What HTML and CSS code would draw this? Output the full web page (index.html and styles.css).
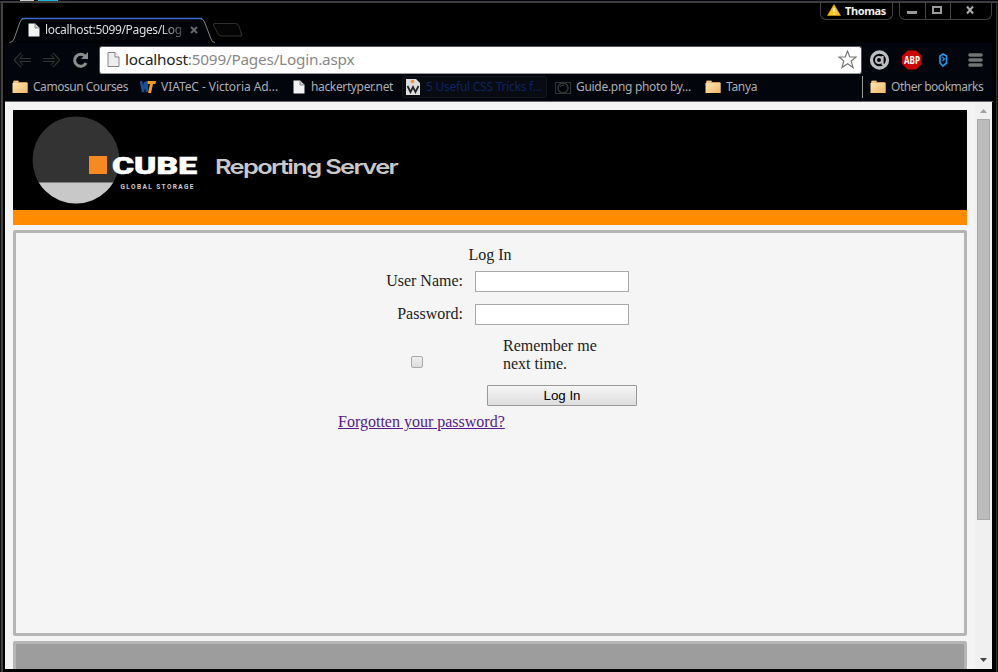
FILE: index.html
```
<!DOCTYPE html>
<html lang="en">
<head>
<meta charset="utf-8">
<title>Reporting Server</title>
<link rel="stylesheet" href="styles.css">
</head>
<body>
<svg width="0" height="0" class="defs">
  <defs>
    <linearGradient id="fold" x1="0" y1="0" x2="1" y2="1"><stop offset="0" stop-color="#ffe6b5"/><stop offset="1" stop-color="#f0b765"/></linearGradient>
    <symbol id="folder" viewBox="0 0 16 14"><path d="M1 13V2Q1 .5 2 .5H6Q7 .5 7.3 2H14.5Q15.5 2 15.5 3V13Z" fill="#d99a50"/><path d="M.5 3H15.5V13H.5Z" fill="url(#fold)"/><path d="M2 2H6" stroke="#fff0cf"/></symbol>
    <symbol id="page" viewBox="0 0 12 14"><path d="M.5 .5H7L11.5 5V13.5H.5Z" fill="#f2f2f2"/><path d="M7 .5V5H11.5" fill="#ccc" stroke="#777" stroke-width=".8"/></symbol>
  </defs>
</svg>
<div class="window">
  <div class="desktop"><i class="d1"></i><i class="d2"></i></div>
  <div class="titlebar">
    <div class="tab">
      <svg class="tabshape" width="240" height="29"><path d="M4.500 26.500Q7.500 26.500 9 23L15 6Q16 2.500 19 2.500H195Q198.500 2.500 199.500 6L206 23Q207 26.500 210 26.500" fill="#010309" stroke="#828282"/><path d="M17 2.500H197" stroke="#3e68cf" stroke-width="1.300"/><path d="M209 7.500H230Q233 7.500 234 10L237 20H217Q214 20 213 18L208.500 9Q208 7.500 210 7.500" fill="#050505" stroke="#303030"/></svg>
      <svg class="tabicon" width="12" height="14"><use href="#page"/></svg>
      <span class="tabtitle">localhost:5099/Pages/Log</span>
      <svg class="close" width="8" height="8"><path d="M1 1L7 7M7 1L1 7" stroke="#686868" stroke-width="2"/></svg>
    </div>
    <div class="user"><svg width="14" height="12"><path d="M7 .5L13.500 11.500H.5Z" fill="#ffc21c" stroke="#dba215" stroke-width=".6"/><path d="M7 4V8M7 9V10.500" stroke="#fff" stroke-width="1.400"/></svg><span>Thomas</span></div>
    <div class="controls">
      <svg width="92" height="17" fill="none"><path d="M25.500 0V16M50.500 0V16" stroke="#444"/><path d="M7 9.500H17" stroke="#999" stroke-width="3"/><rect x="33" y="4" width="8" height="6" stroke="#999" stroke-width="2"/><path d="M67 3.500L73 10.500M73 3.500L67 10.500" stroke="#aaa" stroke-width="2"/></svg>
    </div>
  </div>
  <div class="toolbar">
    <svg class="nav" width="82" height="24" fill="none">
      <path d="M8 6L2 12L8 18M2 12H17" stroke="#303236" stroke-width="4" stroke-linejoin="round"/><path d="M8 6L2.500 12L8 18M3 12H17" stroke="#090b0e" stroke-width="2.200"/>
      <path d="M38 6L44 12L38 18M44 12H29" stroke="#303236" stroke-width="4" stroke-linejoin="round"/><path d="M38 6L43.500 12L38 18M43 12H29" stroke="#090b0e" stroke-width="2.200"/>
      <path d="M71 8.200A6 6 0 1 0 72 15" stroke="#8c8c8c" stroke-width="3"/><path d="M74 4V11H67Z" fill="#8c8c8c"/>
    </svg>
    <div class="address">
      <svg width="13" height="15"><path d="M1 .5H8L12 5V14.500H1Z" fill="#eee" stroke="#858585"/><path d="M8 .5V5H12" fill="#fff" stroke="#858585"/></svg>
      <span class="url"><b>localhost</b>:5099/Pages/Login.aspx</span>
      <svg class="star" width="19" height="19"><path d="M9.500 1L11.800 7H18L13.200 11L15 17.500L9.500 13.800L4 17.500L5.800 11L1 7H7.200Z" fill="#fff" stroke="#777" stroke-width="1.200"/></svg>
    </div>
    <svg class="ext" width="125" height="26" fill="none">
      <circle cx="14.500" cy="13" r="8" stroke="#bdbdbd" stroke-width="3.300"/><circle cx="14" cy="13" r="3" stroke="#bdbdbd" stroke-width="2"/><path d="M17.500 9V17L20 19" stroke="#bdbdbd" stroke-width="2.200"/>
      <path d="M43 3.500H51L56.500 9V17L51 22.500H43L37 17V9Z" fill="#cc0606"/><text x="39" y="16.500" textLength="16" lengthAdjust="spacingAndGlyphs" class="abp">ABP</text>
      <path d="M78 7L81.500 9V16L78 19L75 16V9Z" stroke="#2995e9" stroke-width="1.700"/><path d="M77 10L79.500 12L77.500 14" stroke="#2995e9" stroke-width="1.300"/>
      <path d="M105 8H116M105 13H116M105 18H116" stroke="#737373" stroke-width="3.600" stroke-linecap="round"/>
    </svg>
  </div>
  <div class="bookmarks">
    <div class="bm camosun"><svg width="16" height="14"><use href="#folder"/></svg><span>Camosun Courses</span></div>
    <div class="bm viatec"><svg width="17" height="14"><path d="M1 1L3 12L5 2L7 12V1" fill="none" stroke="#1b4f95" stroke-width="2.400"/><path d="M8 1H16L15.500 4H13L11 13H8L10 4H7.500Z" fill="#f99b20"/></svg><span>VIATeC - Victoria Ad...</span></div>
    <div class="bm hacker"><svg width="12" height="14"><use href="#page"/></svg><span>hackertyper.net</span></div>
    <div class="bm css"><svg width="14" height="16"><path d="M0 0H10L14 4V16H0Z" fill="#ddd"/><path d="M1.500 7L4.500 13L7 8L9.500 13L12.500 7" fill="none" stroke="#222" stroke-width="1.700"/><circle cx="6.500" cy="2.500" r="1.700" fill="#f38a35"/></svg><span>5 Useful CSS Tricks f...</span></div>
    <div class="bm guide"><svg width="16" height="13" fill="none"><rect x=".5" y="1.500" width="15" height="11" stroke="#303030"/><circle cx="8" cy="7" r="5" stroke="#353535" stroke-width="1.500"/><path d="M5 6Q6 4 9 4" stroke="#444"/></svg><span>Guide.png photo by...</span></div>
    <div class="bm tanya"><svg width="16" height="14"><use href="#folder"/></svg><span>Tanya</span></div>
    <div class="bm other"><svg width="16" height="14"><use href="#folder"/></svg><span>Other bookmarks</span></div>
  </div>
  <div class="viewport">
    <main>
      <header>
        <svg width="500" height="100">
          <defs><clipPath id="low"><rect x="0" y="72.500" width="120" height="28"/></clipPath></defs>
          <circle cx="63" cy="50" r="43.500" fill="#333"/><circle cx="63" cy="50" r="43.500" fill="#c8c8c8" clip-path="url(#low)"/><rect x="76" y="46" width="18" height="18" fill="#f68a21"/>
          <text class="cube" x="99" y="63.500" textLength="85" lengthAdjust="spacingAndGlyphs">CUBE</text>
          <text class="global" x="107.500" y="79" textLength="73">GLOBAL STORAGE</text>
          <text class="report" x="202" y="64" textLength="182" lengthAdjust="spacingAndGlyphs">Reporting Server</text>
        </svg>
      </header>
      <section class="panel">
        <form>
          <div class="heading">Log In</div>
          <div class="row"><label for="u">User Name:</label><input id="u" type="text"></div>
          <div class="row"><label for="p">Password:</label><input id="p" type="password"></div>
          <div class="remember"><input id="r" type="checkbox"><label for="r">Remember me next time.</label></div>
          <button type="button">Log In</button>
          <a href="#"><span>Forgotten your password?</span></a>
        </form>
      </section>
      <footer></footer>
    </main>
    <div class="scroll">
      <svg width="17" height="17"><path d="M5 11H12L8.500 7Z" fill="#a0a0a0"/></svg>
      <div class="thumb"></div>
      <svg class="down" width="17" height="17"><path d="M5 6H12L8.500 10Z" fill="#444"/></svg>
    </div>
  </div>
</div>
</body>
</html>
```
FILE: styles.css
```
* { box-sizing: border-box; }
body { margin: 0; overflow: hidden; background: #000; }
svg { display: block; flex: none; }
.defs { position: absolute; }
.window { width: 998px; height: 672px; padding: 0 6px 3px 5px; background: linear-gradient(90deg, #111 0 1px, #424242 1px 3px, #000 3px 996px, #303030 996px 997px, #111 997px); font-family: "Noto Sans", sans-serif; display: flex; flex-direction: column; }
.desktop { height: 3px; margin: 0 -6px 0 -5px; background: #05050e; border-bottom: 2px solid #3d3d3d; display: flex; flex: none; }
.d1 { width: 14px; height: 1px; margin-left: 20px; background: #ccc; }
.d2 { width: 20px; height: 1px; margin-left: 4px; background: #18b8d5; }
.titlebar { height: 40px; flex: none; display: flex; align-items: flex-start; background: #000; }
.tab { position: relative; width: 242px; height: 29px; margin-top: 13px; display: flex; align-items: center; padding: 0 0 2px 23px; flex: none; }
.tabshape { position: absolute; left: 0; top: 0; }
.tabicon, .tabtitle, .close { position: relative; top: 0; }
.tabtitle { width: 141px; margin-left: 5px; color: #ddd; font-size: 12px; letter-spacing: -.35px; white-space: nowrap; overflow: hidden; -webkit-mask-image: linear-gradient(90deg, #000 116px, #0005 136px); mask-image: linear-gradient(90deg, #000 116px, #0005 136px); }
.close { margin-left: 4px; }
.user { width: 74px; height: 17px; margin-left: 573px; border: 1px solid #414141; border-top: 0; border-radius: 0 0 6px 6px; display: flex; align-items: center; gap: 4px; padding: 0 0 2px 6px; color: #eee; font-size: 11px; font-weight: 700; letter-spacing: -.4px; }
.controls { width: 93px; height: 17px; margin-left: 6px; border: 1px solid #414141; border-top: 0; border-radius: 0 0 6px 6px; }
.toolbar { height: 33px; flex: none; display: flex; align-items: center; background: #02050c; padding-left: 9px; }
.address { flex: none; width: 763px; height: 28px; margin: 0 0 0 3px; border: 1px solid #555; border-bottom-color: #999; background: #fff; border-radius: 3px; display: flex; align-items: center; padding-left: 7px; }
.url { margin: -2px 0 0 5px; width: 713px; font-size: 15.3px; line-height: 20px; color: #888; white-space: nowrap; letter-spacing: -.2px; }
.url b { font-weight: 400; color: #222; }
.ext { margin-left: 3px; }
.abp { font: 700 10px "Noto Sans", sans-serif; fill: #fff; }
.bookmarks { height: 26px; flex: none; display: flex; align-items: flex-start; background: #02050c; border-bottom: 1px solid #666; padding-left: 7px; margin-right: -1px; }
.bm { height: 22px; display: flex; flex: none; align-items: center; gap: 5px; color: #a9adb2; font-size: 12px; line-height: 18px; white-space: nowrap; letter-spacing: -.3px; }
.camosun { width: 128px; letter-spacing: -.47px; }
.viatec { width: 153px; gap: 4px; letter-spacing: -.07px; }
.hacker { width: 109px; gap: 6px; letter-spacing: -.36px; }
.css { width: 145px; padding-left: 3px; gap: 6px; border: 1px solid #14171d; background: #080b12; border-radius: 3px; color: #0b2563; letter-spacing: -.25px; }
.guide { width: 150px; padding-left: 8px; }
.tanya { width: 165px; padding-left: 8px; }
.other { padding-left: 7px; border-left: 1px solid #999; letter-spacing: -.47px; }
.viewport { height: 567px; width: 987px; display: flex; overflow: hidden; background: #f4f4f4; }
main { width: 954px; margin: 8px 8px 0; flex: none; }
header { height: 115px; background: #000; border-bottom: 15px solid #ff8c00; }
.cube { font: 900 24px Roboto, sans-serif; fill: #fff; stroke: #fff; stroke-width: .6; }
.global { font: 700 6.5px Roboto, sans-serif; fill: #ccc; }
.report { font: 600 20px Inter, sans-serif; letter-spacing: -1.3px; fill: #c8c8c8; }
.panel { height: 406px; margin-top: 5px; border: 3px solid #b5b5b5; border-radius: 2px; background: #f5f5f5; }
form { width: 304px; margin-left: 322px; padding-top: 13px; font: 16px/18px "Liberation Serif", serif; color: #222; }
.heading { text-align: center; height: 18px; }
.row { height: 33px; display: flex; align-items: center; }
.row label { width: 125px; text-align: right; }
.row input { width: 154px; height: 21px; margin: 2px 0 0 12px; border: 1px solid #a9a9a9; background: #fff; padding: 1px; }
.remember { height: 40px; display: flex; align-items: center; margin-top: 5px; }
.remember input { appearance: none; width: 12px; height: 12px; margin: 13px 80px 0 73px; border: 1px solid #aaa; border-radius: 2px; background: linear-gradient(#eee, #ddd); }
.remember label { width: 110px; }
button { display: block; width: 150px; height: 21px; margin: 10px 0 0 149px; padding: 0; border: 1px solid #999; border-radius: 1px; background: linear-gradient(#f6f6f6, #ddd); font: 13.33px "Liberation Sans", sans-serif; color: #000; }
form a { display: block; margin-top: 7px; color: #551a8b; }
footer { height: 60px; margin-top: 5px; border: 3px solid #b5b5b5; border-radius: 2px; background: #9d9d9d; }
.scroll { width: 17px; background: #f0f0f0; display: flex; flex-direction: column; }
.thumb { width: 13px; height: 401px; margin-left: 2px; background: #bcbcbc; border: 1px solid #a8a8a8; }
.down { margin-top: auto; }
```
